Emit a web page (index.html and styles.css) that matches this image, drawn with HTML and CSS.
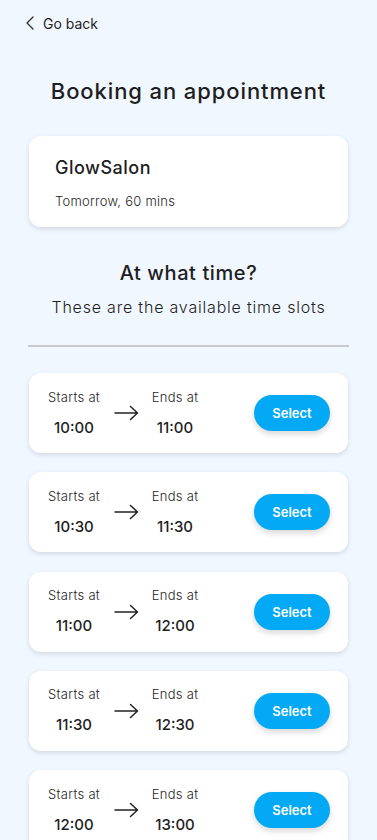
FILE: index.html
```html
<!DOCTYPE html>
<html lang="en">
<head>
<meta charset="utf-8">
<title>Booking an appointment</title>
<link rel="stylesheet" href="styles.css">
</head>
<body>
<div class="page">
  <a class="back" href="#">
    <svg class="back-icon" width="8" height="14" viewBox="0 0 8 14"><path d="M7 1 L1 7 L7 13" fill="none" stroke="#333" stroke-width="1.4" stroke-linecap="round" stroke-linejoin="round"/></svg>
    <span>Go back</span>
  </a>
  <h1 class="title">Booking an appointment</h1>
  <div class="card salon">
    <div class="salon-name">GlowSalon</div>
    <div class="salon-meta">Tomorrow, 60 mins</div>
  </div>
  <h2 class="subtitle">At what time?</h2>
  <p class="lead">These are the available time slots</p>
  <hr class="divider">
  <div class="slots">
    <div class="card slot">
      <div class="col"><span class="lbl">Starts at</span><span class="time">10:00</span></div>
      <svg class="arrow" width="25" height="16" viewBox="0 0 25 16"><path d="M1 8 H23.5 M16.5 1.5 L23.5 8 L16.5 14.5" fill="none" stroke="#222" stroke-width="1.5" stroke-linecap="round" stroke-linejoin="round"/></svg>
      <div class="col"><span class="lbl">Ends at</span><span class="time">11:00</span></div>
      <button class="select">Select</button>
    </div>
    <div class="card slot">
      <div class="col"><span class="lbl">Starts at</span><span class="time">10:30</span></div>
      <svg class="arrow" width="25" height="16" viewBox="0 0 25 16"><path d="M1 8 H23.5 M16.5 1.5 L23.5 8 L16.5 14.5" fill="none" stroke="#222" stroke-width="1.5" stroke-linecap="round" stroke-linejoin="round"/></svg>
      <div class="col"><span class="lbl">Ends at</span><span class="time">11:30</span></div>
      <button class="select">Select</button>
    </div>
    <div class="card slot">
      <div class="col"><span class="lbl">Starts at</span><span class="time">11:00</span></div>
      <svg class="arrow" width="25" height="16" viewBox="0 0 25 16"><path d="M1 8 H23.5 M16.5 1.5 L23.5 8 L16.5 14.5" fill="none" stroke="#222" stroke-width="1.5" stroke-linecap="round" stroke-linejoin="round"/></svg>
      <div class="col"><span class="lbl">Ends at</span><span class="time">12:00</span></div>
      <button class="select">Select</button>
    </div>
    <div class="card slot">
      <div class="col"><span class="lbl">Starts at</span><span class="time">11:30</span></div>
      <svg class="arrow" width="25" height="16" viewBox="0 0 25 16"><path d="M1 8 H23.5 M16.5 1.5 L23.5 8 L16.5 14.5" fill="none" stroke="#222" stroke-width="1.5" stroke-linecap="round" stroke-linejoin="round"/></svg>
      <div class="col"><span class="lbl">Ends at</span><span class="time">12:30</span></div>
      <button class="select">Select</button>
    </div>
    <div class="card slot">
      <div class="col"><span class="lbl">Starts at</span><span class="time">12:00</span></div>
      <svg class="arrow" width="25" height="16" viewBox="0 0 25 16"><path d="M1 8 H23.5 M16.5 1.5 L23.5 8 L16.5 14.5" fill="none" stroke="#222" stroke-width="1.5" stroke-linecap="round" stroke-linejoin="round"/></svg>
      <div class="col"><span class="lbl">Ends at</span><span class="time">13:00</span></div>
      <button class="select">Select</button>
    </div>
  </div>
</div>
</body>
</html>
```
FILE: styles.css
```css
* { box-sizing: border-box; }
html, body { margin: 0; padding: 0; background: #f1f7fe; }
body {
  font-family: "Inter", "Open Sans", sans-serif;
  color: #1e1e1e;
  height: 840px;
  overflow: hidden;
}
.page { padding: 14px 29px 0; }
.back {
  display: flex;
  align-items: center;
  gap: 9px;
  color: #1e1e1e;
  text-decoration: none;
  font-size: 14px;
  height: 18px;
  margin-left: -3px;
}
.back-icon { display: block; }
.title {
  margin: 44px 0 0;
  text-align: center;
  font-size: 22px;
  font-weight: 500;
  line-height: 30px;
  letter-spacing: 0.9px;
}
.card {
  background: #fff;
  border-radius: 12px;
  box-shadow: 0 2px 5px rgba(0, 0, 0, 0.12);
}
.salon {
  margin-top: 30px;
  height: 91px;
  padding: 20px 26px 0;
}
.salon-name { font-size: 18px; font-weight: 500; line-height: 24px; letter-spacing: 0.5px; }
.salon-meta { font-size: 13px; font-weight: 300; line-height: 18px; margin-top: 12px; letter-spacing: 0.25px; }
.subtitle {
  margin: 32px 0 0;
  text-align: center;
  font-size: 20px;
  font-weight: 500;
  line-height: 28px;
  letter-spacing: 0.6px;
}
.lead {
  margin: 9px 0 0;
  text-align: center;
  font-size: 16px;
  font-weight: 300;
  line-height: 22px;
  letter-spacing: 0.8px;
}
.divider {
  margin: 27px -1px 0;
  border: 0;
  height: 2px;
  background: #c9cacc;
}
.slots {
  margin-top: 26px;
  display: flex;
  flex-direction: column;
  gap: 19.3px;
}
.slot {
  height: 80px;
  display: flex;
  align-items: center;
  padding: 0 18px;
  flex-shrink: 0;
}
.col {
  display: flex;
  flex-direction: column;
  align-items: center;
  width: 54px;
}
.lbl { font-size: 13px; font-weight: 300; line-height: 16px; letter-spacing: 0.3px; }
.time { font-size: 15px; font-weight: 500; line-height: 20px; margin-top: 13px; }
.arrow { margin: 0 9px 0 13px; display: block; }
.select {
  margin-left: auto;
  width: 76px;
  height: 36px;
  border: 0;
  border-radius: 18px;
  background: #03a9f4;
  color: #fff;
  font-family: inherit;
  font-size: 13px;
  font-weight: 600;
  box-shadow: 0 3px 6px rgba(0, 0, 0, 0.16);
  cursor: pointer;
}
```
